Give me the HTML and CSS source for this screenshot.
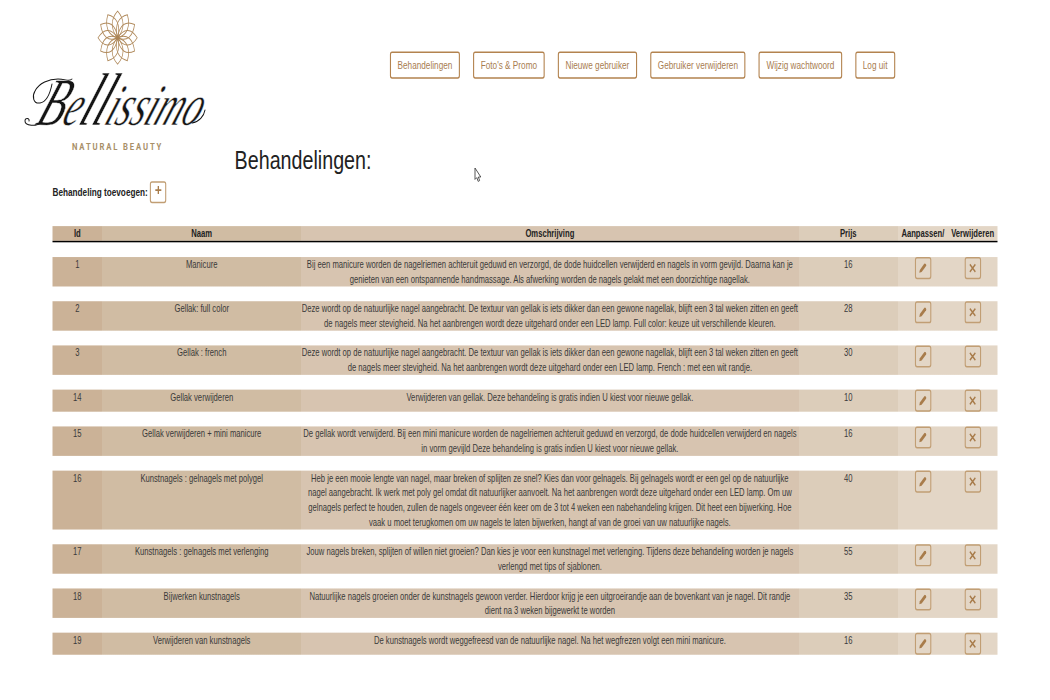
FILE: index.html
```
<!DOCTYPE html>
<html lang="nl">
<head>
<meta charset="utf-8">
<title>Bellissimo - Behandelingen</title>
<link rel="stylesheet" href="styles.css">
<script src="table.js" defer></script>
</head>
<body>
<div class="viewport">
<div class="page">
  <header class="top">
    <svg class="logo" viewBox="0 0 230 155" preserveAspectRatio="none">
      <defs><path id="petal" d="M0 0C-10.5 -9 -9 -19 0 -26.5C9 -19 10.5 -9 0 0Z"/></defs>
      <g class="flower" transform="translate(117.6 37.7) scale(.74 1)">
        <use href="#petal"/><use href="#petal" transform="rotate(30)"/><use href="#petal" transform="rotate(60)"/>
        <use href="#petal" transform="rotate(90)"/><use href="#petal" transform="rotate(120)"/><use href="#petal" transform="rotate(150)"/>
        <use href="#petal" transform="rotate(180)"/><use href="#petal" transform="rotate(210)"/><use href="#petal" transform="rotate(240)"/>
        <use href="#petal" transform="rotate(270)"/><use href="#petal" transform="rotate(300)"/><use href="#petal" transform="rotate(330)"/>
        <circle r="3" class="heart"/>
      </g>
      <text class="brand" transform="translate(34 124.5) skewX(-22)" x="0" y="0" textLength="163" lengthAdjust="spacingAndGlyphs"><tspan class="cap">B</tspan>e<tspan class="tall">ll</tspan>issimo</text>
      <path class="swirl" d="M42 122C36 127 25 126 25 121C25 117 30 118 29 121M52 84C50 94 46 102 40 103C33 104 32 96 35 91C39 83 49 79 58 79C66 79 69 82 72 79M192 123C199 122 204 116 205 110"/>
      <text class="tagline" transform="translate(72 150) scale(.82 1)" textLength="109" lengthAdjust="spacing">NATURAL BEAUTY</text>
    </svg>
    <nav class="nav">
      <a class="btn">Behandelingen</a><a class="btn">Foto's &amp; Promo</a><a class="btn">Nieuwe gebruiker</a><a class="btn">Gebruiker verwijderen</a><a class="btn">Wijzig wachtwoord</a><a class="btn">Log uit</a>
    </nav>
    <h1 class="title">Behandelingen:</h1>
  </header>
  <main class="content">
    <div class="add"><span>Behandeling toevoegen:</span><a class="icon-btn plus"><svg viewBox="0 0 14 14"><path d="M7 1.5V12.5M1.5 7H12.5"/></svg></a></div>
    <div class="row head"><div>Id</div><div>Naam</div><div>Omschrijving</div><div>Prijs</div><div>Aanpassen/</div><div>Verwijderen</div></div>
    <div id="rows"></div>
  </main>
</div>
<svg class="cursor" viewBox="0 0 8 16"><path d="M1 1V12.4L2.8 10.6L4.2 14.4L5.6 13.6L4.4 10H6.8Z"/></svg>
</div>
</body>
</html>
```
FILE: styles.css
```
body { margin: 0; background: #fff; }
.viewport { position: relative; width: 1050px; height: 700px; overflow: hidden; }
.page {
  width: 1920px;
  height: 950px;
  transform: scale(.546875, .7365);
  transform-origin: 0 0;
  font: 14px/20px "Liberation Sans", Arial, sans-serif;
  color: #3a3a3a;
}
.top { display: grid; grid-template-columns: 429px 1fr; grid-template-rows: 190px 56px; height: 246px; }
.logo { grid-row: 1 / 3; width: 420.6px; height: 210.5px; overflow: visible; }
.flower { fill: none; stroke: #b08a5c; stroke-width: 1; }
.heart { fill: #a87f4f; fill-opacity: .5; stroke: none; }
.brand { font: italic 59px "Liberation Serif", serif; fill: #151515; stroke: #fff; stroke-width: .5; }
.cap { font-size: 68px; }
.tall { font-size: 75px; }
.swirl { fill: none; stroke: #151515; stroke-width: 1; stroke-linecap: round; }
.tagline { font: bold 9.4px Roboto, sans-serif; fill: #a88f68; }
.nav { display: flex; gap: 24px; align-items: flex-start; padding: 70px 0 0 284px; }
.btn {
  border: 2px solid #b3834f;
  border-radius: 4px;
  padding: 6px 12px;
  font-size: 15px;
  line-height: 21px;
  color: #a87c50;
  background: #fff;
  white-space: nowrap;
}
.title { margin: 7px 0 0; font-size: 36px; line-height: 40px; font-weight: 400; color: #222; }
.content { padding: 0 96px; }
.add { display: flex; gap: 4px; height: 61px; font-size: 15px; font-weight: bold; line-height: 29px; color: #222; }
.icon-btn {
  box-sizing: border-box;
  display: flex;
  align-items: center;
  justify-content: center;
  width: 30px;
  height: 30px;
  border: 2px solid #c19e74;
  border-radius: 4px;
}
.icon-btn svg { width: 15px; height: 14px; fill: none; stroke: #a87c4b; stroke-width: 2.4; }
.icon-btn .pencil { fill: #a87c4b; stroke: none; }
.plus { background: #fff; align-items: flex-start; padding-top: 3px; }
.row {
  display: grid;
  grid-template-columns: 1fr 4fr 10fr 2fr 1fr 1fr;
  margin-bottom: 20px;
  text-align: center;
  white-space: nowrap;
  background: linear-gradient(90deg, #cbb297 5.263%, #d0bca3 5.263% 26.316%, #d7c4b0 26.316% 78.947%, #dccdba 78.947% 89.474%, #e3d6c6 89.474%);
}
.row > div { display: flex; justify-content: center; }
.head { border-bottom: 2px solid #000; font-weight: bold; color: #222; }
.cursor { position: absolute; left: 474px; top: 167px; width: 8px; height: 16px; fill: #fff; stroke: #444; stroke-width: .9; }
```
FILE: table.js
```
const treatments = [
  [1, "Manicure", ["Bij een manicure worden de nagelriemen achteruit geduwd en verzorgd, de dode huidcellen verwijderd en nagels in vorm gevijld. Daarna kan je", "genieten van een ontspannende handmassage. Als afwerking worden de nagels gelakt met een doorzichtige nagellak."], 16],
  [2, "Gellak: full color", ["Deze wordt op de natuurlijke nagel aangebracht. De textuur van gellak is iets dikker dan een gewone nagellak, blijft een 3 tal weken zitten en geeft", "de nagels meer stevigheid. Na het aanbrengen wordt deze uitgehard onder een LED lamp. Full color: keuze uit verschillende kleuren."], 28],
  [3, "Gellak : french", ["Deze wordt op de natuurlijke nagel aangebracht. De textuur van gellak is iets dikker dan een gewone nagellak, blijft een 3 tal weken zitten en geeft", "de nagels meer stevigheid. Na het aanbrengen wordt deze uitgehard onder een LED lamp. French : met een wit randje."], 30],
  [14, "Gellak verwijderen", ["Verwijderen van gellak. Deze behandeling is gratis indien U kiest voor nieuwe gellak."], 10],
  [15, "Gellak verwijderen + mini manicure", ["De gellak wordt verwijderd. Bij een mini manicure worden de nagelriemen achteruit geduwd en verzorgd, de dode huidcellen verwijderd en nagels", "in vorm gevijld Deze behandeling is gratis indien U kiest voor nieuwe gellak."], 16],
  [16, "Kunstnagels : gelnagels met polygel", ["Heb je een mooie lengte van nagel, maar breken of splijten ze snel? Kies dan voor gelnagels. Bij gelnagels wordt er een gel op de natuurlijke", "nagel aangebracht. Ik werk met poly gel omdat dit natuurlijker aanvoelt. Na het aanbrengen wordt deze uitgehard onder een LED lamp. Om uw", "gelnagels perfect te houden, zullen de nagels ongeveer één keer om de 3 tot 4 weken een nabehandeling krijgen. Dit heet een bijwerking. Hoe", "vaak u moet terugkomen om uw nagels te laten bijwerken, hangt af van de groei van uw natuurlijke nagels."], 40],
  [17, "Kunstnagels : gelnagels met verlenging", ["Jouw nagels breken, splijten of willen niet groeien? Dan kies je voor een kunstnagel met verlenging. Tijdens deze behandeling worden je nagels", "verlengd met tips of sjablonen."], 55],
  [18, "Bijwerken kunstnagels", ["Natuurlijke nagels groeien onder de kunstnagels gewoon verder. Hierdoor krijg je een uitgroeirandje aan de bovenkant van je nagel. Dit randje", "dient na 3 weken bijgewerkt te worden"], 35],
  [19, "Verwijderen van kunstnagels", ["De kunstnagels wordt weggefreesd van de natuurlijke nagel. Na het wegfrezen volgt een mini manicure."], 16]
];
const pencil = '<a class="icon-btn"><svg class="pencil" viewBox="0 0 14 14"><path d="M.5 13.5L1.5 9.5L9.5 1.2Q10.8 0 12.3 1.3Q14 3 12.9 4.3L4.8 12.4Z"/></svg></a>';
const cross = '<a class="icon-btn"><svg viewBox="0 0 14 14"><path d="M2 2L12 12M12 2L2 12"/></svg></a>';
document.getElementById("rows").innerHTML = treatments.map(([id, name, lines, price]) =>
  `<div class="row"><div>${id}</div><div>${name}</div><div>${lines.join("<br>")}</div><div>${price}</div><div>${pencil}</div><div>${cross}</div></div>`
).join("");
```
